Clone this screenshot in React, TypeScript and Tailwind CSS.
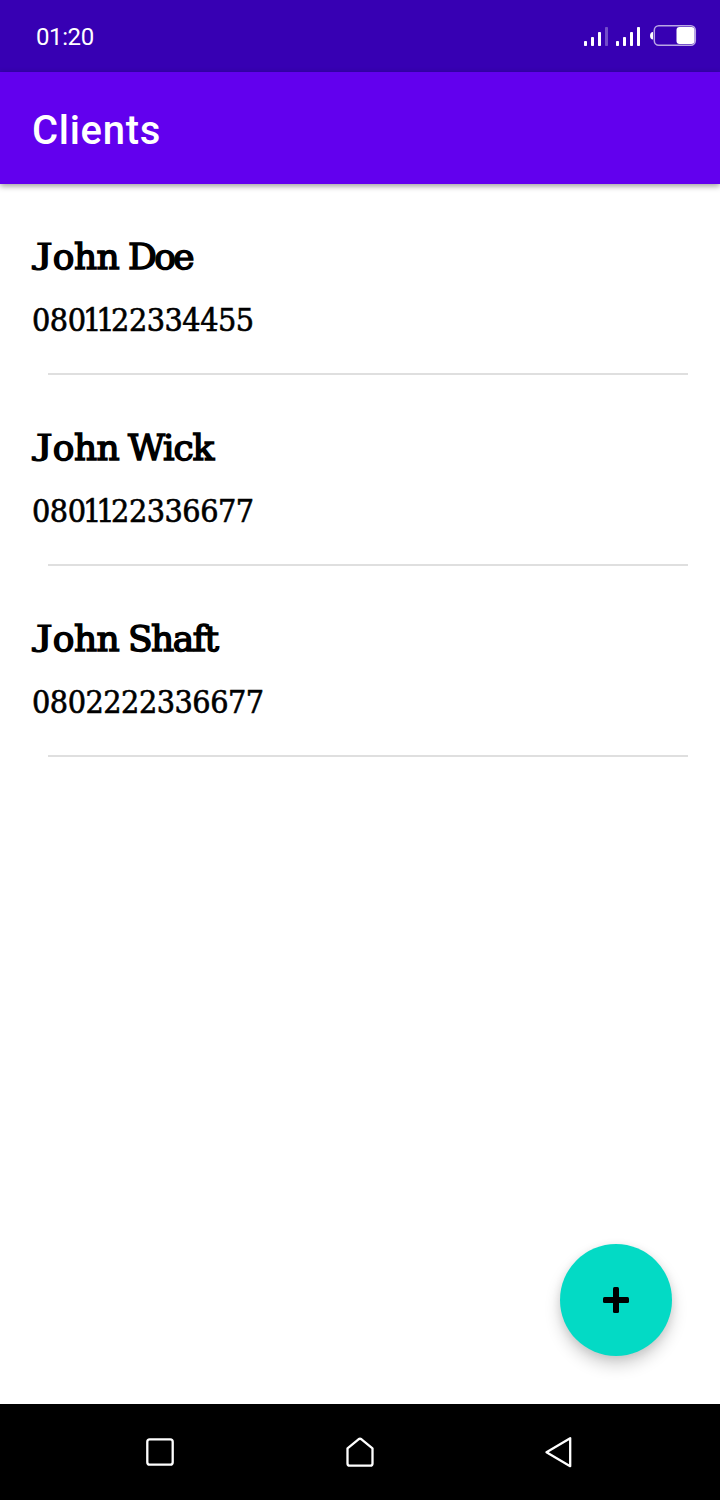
type Client = { first: string; last: string; phone: string; lastClass: string };

const clients: Client[] = [
  { first: "John", last: "Doe", phone: "0801122334455", lastClass: "tracking-[-2.6px]" },
  { first: "John", last: "Wick", phone: "0801122336677", lastClass: "tracking-[-1.2px]" },
  { first: "John", last: "Shaft", phone: "0802222336677", lastClass: "tracking-[-1.5px]" },
];

const slab = "font-['DejaVu_Serif',serif]";
const slabNarrow = "font-['DejaVu_Serif_Condensed','DejaVu_Serif',serif] [font-stretch:condensed]";

function StatusIcons() {
  return (
    <svg width="120" height="30" viewBox="580 21 120 30" fill="#fff">
      <rect x="584" y="41" width="3" height="5" rx="0.8" />
      <rect x="591" y="37" width="3" height="9" rx="0.8" />
      <rect x="598" y="32" width="3" height="14" rx="0.8" />
      <rect x="605" y="27" width="3" height="19" rx="0.8" opacity="0.3" />
      <rect x="616" y="41" width="3" height="5" rx="0.8" />
      <rect x="623" y="37" width="3" height="9" rx="0.8" />
      <rect x="630" y="32" width="3" height="14" rx="0.8" />
      <rect x="637" y="27" width="3" height="19" rx="0.8" />
      <path d="M653 32v7.4c-1.8 0-3-1.6-3-3.7s1.2-3.7 3-3.7z" />
      <rect x="654.3" y="25.8" width="41" height="19.4" rx="4.5" fill="none" stroke="#fff" strokeOpacity="0.65" strokeWidth="1.5" />
      <rect x="676.5" y="27" width="18" height="17" rx="3" />
    </svg>
  );
}

function Name({ first, last, lastClass }: { first: string; last: string; lastClass: string }) {
  return (
    <div className={`${slab} h-12 text-[36px] leading-12 tracking-[-0.6px] whitespace-nowrap [word-spacing:-2px] [-webkit-text-stroke:1.5px_black]`}>
      <span className="mr-[3px] ml-[4px] inline-block origin-[0_10.4px] scale-x-[1.15] scale-y-[0.8]">{first[0]}</span>
      {first.slice(1)} <span className={lastClass}>{last}</span>
    </div>
  );
}

function Phone({ value }: { value: string }) {
  return (
    <div className={`${slabNarrow} h-10 text-[32px] leading-10 tracking-[-0.5px] whitespace-nowrap [-webkit-text-stroke:0.6px_black]`}>
      {value.split(/(1+)/).map((part, i) => (
        <span key={i} className={part.startsWith("1") ? "mr-[1.5px] ml-[-2.5px] tracking-[-5px]" : ""}>
          {part}
        </span>
      ))}
    </div>
  );
}

export default function App() {
  return (
    <div className="relative flex h-[1500px] w-[720px] flex-col overflow-hidden bg-white text-black">
      <div className="flex h-[72px] shrink-0 items-center justify-between bg-[#3700b3] pr-5 pl-9 font-['Roboto',sans-serif] text-2xl text-white">
        <span className="pt-[2px] tracking-[-0.4px]">01:20</span>
        <StatusIcons />
      </div>
      <header className="z-10 flex h-28 shrink-0 items-center bg-[#6200ee] pt-1.5 pl-8 font-['Roboto',sans-serif] text-[40px] font-medium tracking-[0.7px] text-white shadow-[0_2px_6px_rgba(0,0,0,0.4)]">
        Clients
      </header>
      <main className="grow">
        {clients.map((c) => (
          <div key={c.phone} className="flex h-[191px] flex-col pt-[49px] pl-8">
            <Name first={c.first} last={c.last} lastClass={c.lastClass} />
            <div className="mt-[19px]">
              <Phone value={c.phone} />
            </div>
            <div className="mt-auto mr-8 ml-4 h-[2px] shrink-0 bg-[#dfdfdf]" />
          </div>
        ))}
      </main>
      <button aria-label="Add client" className="absolute right-12 bottom-36 flex size-28 items-center justify-center rounded-full bg-[#03dac5] shadow-[0_9px_16px_rgba(0,0,0,0.18),0_2px_8px_rgba(0,0,0,0.09)]">
        <svg width="28" height="28" viewBox="0 0 28 28">
          <rect x="1" y="11" width="26" height="6" rx="1.5" />
          <rect x="11" y="1" width="6" height="26" rx="1.5" />
        </svg>
      </button>
      <nav className="flex h-24 shrink-0 items-center justify-center bg-black">
        <svg width="720" height="96" viewBox="0 1404 720 96" fill="none" stroke="#fff" strokeWidth="2.3" strokeLinejoin="round">
          <rect x="147.3" y="1439.3" width="25.4" height="25.4" rx="2.5" />
          <path d="M347.5 1448.3L358.5 1439.3Q360 1438.2 361.5 1439.3L372.5 1448.3V1463.5Q372.5 1465.7 370.3 1465.7H349.7Q347.5 1465.7 347.5 1463.5Z" />
          <path d="M570.2 1438.2V1466.2L546.5 1452.2Z" />
        </svg>
      </nav>
    </div>
  );
}
